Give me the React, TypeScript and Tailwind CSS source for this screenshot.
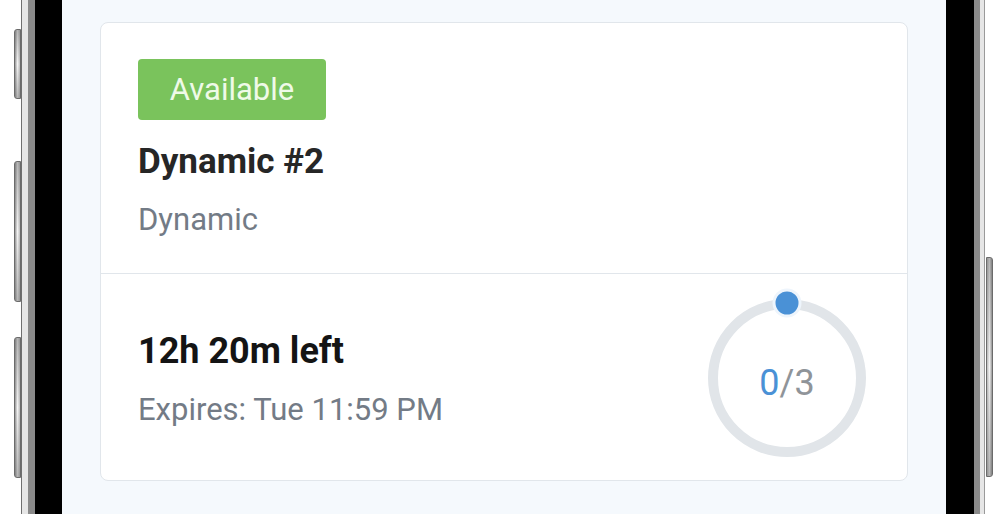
import React from "react";

function SideButton({ h, mt }: { h: string; mt: string }) {
  return (
    <div
      className={`${h} ${mt} w-[7px] overflow-hidden rounded-l-[3px] border border-[#6b6b6b] bg-gradient-to-r from-[#9a9a9a] via-[#f4f4f4] to-[#bdbdbd]`}
    >
      <div className="h-full w-full bg-gradient-to-b from-[#555] via-transparent to-[#555] opacity-40" />
    </div>
  );
}

export default function App() {
  return (
    <div
      className="flex h-[515px] w-[1001px] overflow-hidden bg-white"
      style={{ fontFamily: "Roboto, 'Noto Sans', sans-serif" }}
    >
      {/* left buttons */}
      <div className="flex w-[21px] flex-col pl-[14px]">
        <SideButton h="h-[70px]" mt="mt-[29px]" />
        <SideButton h="h-[141px]" mt="mt-[62px]" />
        <SideButton h="h-[141px]" mt="mt-[35px]" />
      </div>
      {/* left frame */}
      <div className="flex h-[514px]">
        <div className="w-px bg-[#6f6f6f]" />
        <div className="w-[6px] bg-[#e6e6e6]" />
        <div className="w-[7px] bg-[#8a8a8a]" />
        <div className="w-[27px] bg-black" />
      </div>
      {/* screen */}
      <div className="h-[514px] w-[884px] bg-[#f5f9fd] px-[38px] pt-[22px]">
        <div className="h-[459px] rounded-[8px] border border-[#e1e6eb] bg-white">
          <div className="h-[251px] border-b border-[#e1e6eb] pl-[37px] pt-[36px]">
            <div className="flex h-[61px] w-[188px] items-center justify-center rounded-[4px] bg-[#7ac35c] text-[31px] leading-none text-[#effae8]">
              Available
            </div>
            <div className="mt-[24px] text-[35px] font-bold leading-none text-[#262626]">
              Dynamic #2
            </div>
            <div className="mt-[25px] text-[31px] leading-none text-[#737b86]">
              Dynamic
            </div>
          </div>
          <div className="flex h-[206px] items-start justify-between pl-[37px] pr-[41px]">
            <div className="mt-[59px] flex flex-col">
              <div className="text-[36px] font-bold leading-none text-[#141414]">
                12h 20m left
              </div>
              <div className="mt-[25px] text-[31px] leading-none text-[#737b86]">
                Expires: Tue 11:59 PM
              </div>
            </div>
            <div className="relative mt-[25px] h-[158px] w-[158px]">
              <svg width="158" height="158" viewBox="0 0 158 158" className="absolute inset-0">
                <circle cx="79" cy="79" r="74" fill="none" stroke="#e1e5e9" strokeWidth="10" />
              </svg>
              <div className="absolute left-1/2 top-[4px] h-[29px] w-[29px] -translate-x-1/2 -translate-y-1/2 rounded-full border-[3px] border-[#eef5fc] bg-[#4a91d6]" />
              <div className="absolute inset-0 flex items-center justify-center pt-[10px] text-[36px] leading-none">
                <span className="text-[#4a91d6]">0</span>
                <span className="text-[#8f9499]">/3</span>
              </div>
            </div>
          </div>
        </div>
      </div>
      {/* right frame */}
      <div className="flex h-[514px]">
        <div className="w-[28px] bg-black" />
        <div className="w-[6px] bg-[#8a8a8a]" />
        <div className="w-[4px] bg-[#e6e6e6]" />
        <div className="w-px bg-[#9a9a9a]" />
      </div>
      <div className="flex w-[8px] flex-col pl-[1px]">
        <div className="mt-[257px] h-[220px] w-[7px] overflow-hidden rounded-r-[3px] border border-[#6b6b6b] bg-gradient-to-l from-[#9a9a9a] via-[#f4f4f4] to-[#bdbdbd]">
          <div className="h-full w-full bg-gradient-to-b from-[#555] via-transparent to-[#555] opacity-40" />
        </div>
      </div>
    </div>
  );
}
